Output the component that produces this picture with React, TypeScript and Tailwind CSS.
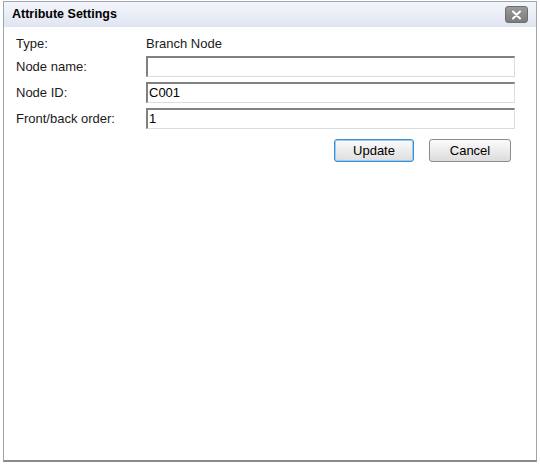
import React from "react";

function Field({ value }: { value: string }) {
  return (
    <div className="h-[21px] w-[369px] border-t-2 border-l-2 border-r border-b border-t-[#808080] border-l-[#808080] border-r-[#dcdcdc] border-b-[#dcdcdc] bg-white pl-[1px] flex items-center text-[13px] text-black">
      {value}
    </div>
  );
}

export default function App() {
  const rows: [string, string][] = [
    ["Node name:", ""],
    ["Node ID:", "C001"],
    ["Front/back order:", "1"],
  ];
  return (
    <div
      className="w-[540px] h-[465px] bg-white pl-[3px] pr-[4px] pt-[1px] pb-[3px] flex"
      style={{ fontFamily: '"Liberation Sans", Arial, sans-serif' }}
    >
      <div className="flex-1 flex flex-col border border-[#9ea4b0] border-b-2 border-b-[#8a8a8a] bg-white">
        <div className="h-[25px] flex items-center justify-between pl-[8px] pr-[8px] bg-gradient-to-b from-[#f4f6fb] to-[#dfe5f1]">
          <span className="text-[12.5px] font-bold text-black">Attribute Settings</span>
          <div className="w-[23px] h-[17px] rounded-[3px] bg-gradient-to-b from-[#9a9a9a] to-[#7c7c7c] border border-[#6e6e6e] flex items-center justify-center">
            <svg width="11" height="10" viewBox="0 0 11 10">
              <path d="M2 1.5 L9 8.5 M9 1.5 L2 8.5" stroke="white" strokeWidth="2" strokeLinecap="round" />
            </svg>
          </div>
        </div>
        <div className="flex flex-col pl-[12px] pr-[21px] pt-[7px] text-[13px] text-[#1a1a1a]">
          <div className="flex items-center h-[20px] mb-[2px]">
            <span className="w-[130px]">Type:</span>
            <span>Branch Node</span>
          </div>
          <div className="flex flex-col gap-[5px]">
            {rows.map(([l, v]) => (
              <div key={l} className="flex items-center">
                <span className="w-[130px]">{l}</span>
                <Field value={v} />
              </div>
            ))}
          </div>
          <div className="flex justify-end gap-[15px] mt-[10px] pr-[4px]">
            <button className="w-[80px] h-[23px] rounded-[3px] border border-[#3d8ed2] bg-gradient-to-b from-[#fbfbfb] to-[#dedede] text-[13px] text-black shadow-[inset_0_0_0_1px_#9ccbf0]">
              Update
            </button>
            <button className="w-[82px] h-[23px] rounded-[3px] border border-[#8c8c8c] bg-gradient-to-b from-[#fbfbfb] to-[#dcdcdc] text-[13px] text-black">
              Cancel
            </button>
          </div>
        </div>
      </div>
    </div>
  );
}
